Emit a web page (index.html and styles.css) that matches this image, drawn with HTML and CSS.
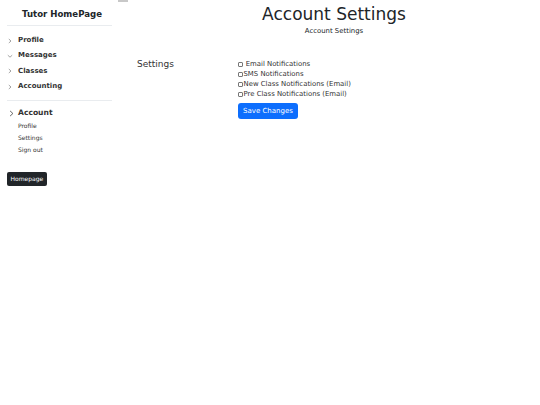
FILE: index.html
```html
<!DOCTYPE html>
<html>
<head>
<meta charset="utf-8">
<link rel="stylesheet" href="styles.css">
</head>
<body>
<div class="layout">
  <aside class="sidebar">
    <div class="brand">Tutor HomePage</div>
    <ul class="nav">
      <li><svg class="chev" viewBox="0 0 6 6"><path d="M1.8 1 L4 3 L1.8 5"/></svg>Profile</li>
      <li><svg class="chev" viewBox="0 0 6 6"><path d="M0.8 2.2 L3 4.2 L5.2 2.2"/></svg>Messages</li>
      <li><svg class="chev" viewBox="0 0 6 6"><path d="M1.8 1 L4 3 L1.8 5"/></svg>Classes</li>
      <li><svg class="chev" viewBox="0 0 6 6"><path d="M1.8 1 L4 3 L1.8 5"/></svg>Accounting</li>
    </ul>
    <div class="account">
      <div class="account-head"><svg class="chev big" viewBox="0 0 6 6"><path d="M1.8 0.8 L4.2 3 L1.8 5.2"/></svg>Account</div>
      <ul class="sub">
        <li>Profile</li>
        <li>Settings</li>
        <li>Sign out</li>
      </ul>
    </div>
    <button class="home-btn">Homepage</button>
  </aside>
  <main class="main">
    <div class="toggle"></div>
    <h1 class="title">Account Settings</h1>
    <div class="subtitle">Account Settings</div>
    <div class="settings-row">
      <div class="label">Settings</div>
      <form class="options">
        <label class="opt"><span class="box"></span>&nbsp;Email Notifications</label>
        <label class="opt"><span class="box"></span>SMS Notifications</label>
        <label class="opt"><span class="box"></span>New Class Notifications (Email)</label>
        <label class="opt"><span class="box"></span>Pre Class Notifications (Email)</label>
        <button type="button" class="save">Save Changes</button>
      </form>
    </div>
  </main>
</div>
</body>
</html>
```
FILE: styles.css
```css
* { box-sizing: border-box; }
html, body { margin: 0; padding: 0; background: #fff; }
body { font-family: "DejaVu Sans", sans-serif; color: #212529; }
.layout { display: flex; }
.sidebar { width: 119px; padding: 6px 7px 0 7px; flex: none; }
.brand { font-weight: bold; font-size: 8.6px; text-align: center; padding: 3px 0 0 5px; height: 20px; border-bottom: 1px solid #e9ecef; }
.nav { list-style: none; margin: 0; padding: 7px 0 6px 0; border-bottom: 1px solid #e9ecef; }
.nav li { font-weight: bold; font-size: 7px; height: 15.3px; line-height: 15.3px; color: #333; display: flex; align-items: center; }
.chev { width: 6px; height: 6px; margin: 0 5px 0 0; fill: none; stroke: #666; stroke-width: 0.6; flex: none; }
.chev.big { width: 7px; height: 7px; margin-right: 3px; stroke: #444; stroke-width: 0.7; }
.account { padding-top: 5px; }
.account-head { font-weight: bold; font-size: 7.6px; height: 14px; line-height: 14px; color: #333; display: flex; align-items: center; padding-left: 1px; }
.sub { list-style: none; margin: 0; padding: 0 0 0 11px; }
.sub li { font-size: 6px; height: 12px; line-height: 12px; color: #333; }
.home-btn { margin-top: 16px; background: #212529; color: #fff; border: none; border-radius: 2px; font-family: "DejaVu Sans", sans-serif; font-size: 6px; padding: 0 3.5px; height: 13.5px; display: block; }
.main { flex: 1; position: relative; padding-left: 18px; }
.toggle { position: absolute; left: -1px; top: 0; width: 10px; height: 1.5px; background: #c8c8c8; }
.title { font-weight: normal; font-size: 17px; margin: 4px 0 0 -9px; text-align: center; line-height: 20px; }
.subtitle { font-size: 6.9px; text-align: center; margin: 3px 0 0 -9px; }
.settings-row { display: flex; margin-top: 24px; }
.label { width: 101px; font-size: 9px; color: #333; }
.options { display: flex; flex-direction: column; align-items: flex-start; }
.opt { font-size: 6.9px; height: 10px; line-height: 10px; display: flex; align-items: center; color: #333; }
.box { display: inline-block; width: 5px; height: 5px; border: 0.6px solid #777; border-radius: 1px; background: #fff; margin-right: 0.5px; }
.save { margin-top: 4px; background: #0d6efd; color: #fff; border: none; border-radius: 3px; font-family: "DejaVu Sans", sans-serif; font-size: 7px; padding: 0 5px; height: 16px; }
```
